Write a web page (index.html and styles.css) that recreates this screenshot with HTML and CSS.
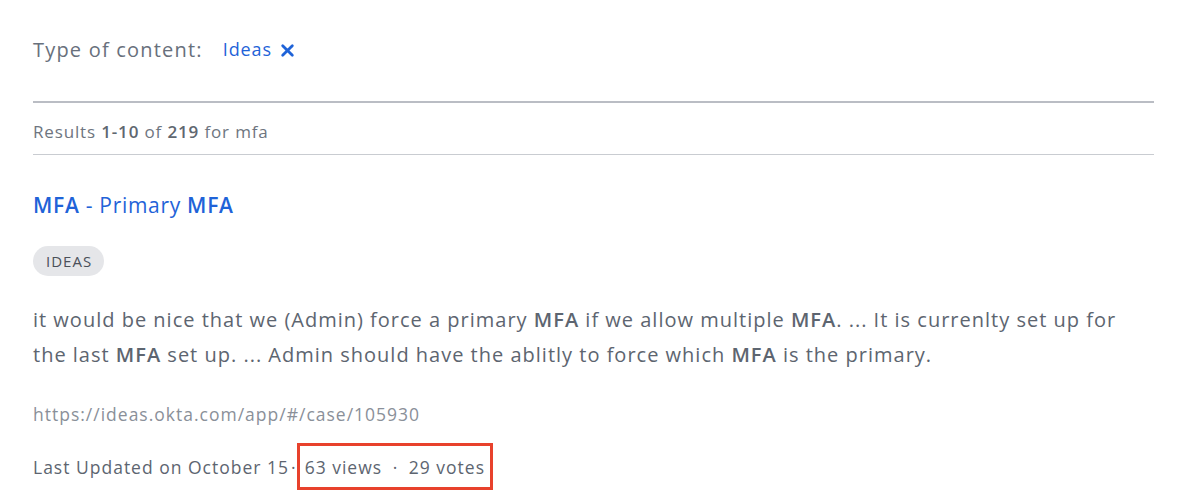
FILE: index.html
```html
<!DOCTYPE html>
<html lang="en">
<head>
<meta charset="utf-8">
<title>Search results</title>
<link rel="stylesheet" href="styles.css">
</head>
<body>
<div class="page">
  <div class="filter">
    <span class="filter-label">Type of content:</span>
    <span class="chip">Ideas
      <svg class="chip-x" viewBox="0 0 14 14" width="15" height="15" aria-hidden="true"><path d="M2.5 2.5 L11.5 11.5 M11.5 2.5 L2.5 11.5" stroke="#1f63d8" stroke-width="2.6" stroke-linecap="round" fill="none"/></svg>
    </span>
  </div>
  <div class="summary">Results <b>1-10</b> of <b>219</b> for mfa</div>
  <div class="result">
    <a class="result-title" href="#"><b>MFA</b> - Primary <b>MFA</b></a>
    <div class="badge-row"><span class="badge">IDEAS</span></div>
    <p class="snippet">it would be nice that we (Admin) force a primary <b>MFA</b> if we allow multiple <b>MFA</b>. ... It is currenlty set up for the last <b>MFA</b> set up. ... Admin should have the ablitly to force which <b>MFA</b> is the primary.</p>
    <div class="url">https://ideas.okta.com/app/#/case/105930</div>
    <div class="meta"><span>Last Updated on October 15</span><span class="dot">·</span><span class="highlight">63 views <span class="dot2">·</span> 29 votes</span></div>
  </div>
</div>
</body>
</html>
```
FILE: styles.css
```css
html, body {
  margin: 0;
  padding: 0;
  background: #ffffff;
}
body {
  font-family: "Open Sans", "Lato", sans-serif;
  color: #5f6770;
}
.page {
  width: 1121px;
  padding: 30px 0 0 33px;
}
.filter {
  display: flex;
  align-items: center;
  height: 38px;
  padding-bottom: 33px;
  border-bottom: 2px solid #babdc4;
}
.filter-label {
  font-size: 20px;
  letter-spacing: 1.2px;
  color: #68707c;
}
.chip {
  display: flex;
  align-items: center;
  margin-left: 20px;
  font-size: 18px;
  letter-spacing: 0.9px;
  color: #1f63d8;
}
.chip-x {
  margin-left: 8px;
  margin-top: 3px;
}
.summary {
  height: 52px;
  line-height: 58px;
  font-size: 17px;
  letter-spacing: 0.85px;
  color: #6e7580;
  border-bottom: 1px solid #c9ccd1;
  box-sizing: border-box;
}
.summary b {
  font-weight: 600;
  color: #5f6770;
}
.result {
  padding-top: 36px;
}
.result-title {
  display: block;
  font-size: 21px;
  letter-spacing: 0.7px;
  color: #1f63d8;
  text-decoration: none;
  line-height: 28px;
}
.result-title b {
  font-weight: 600;
}
.badge-row {
  margin-top: 27px;
}
.badge {
  display: inline-block;
  background: #e5e6e9;
  border-radius: 15px;
  font-size: 15px;
  letter-spacing: 1px;
  color: #4a5059;
  height: 30px;
  line-height: 30px;
  padding: 0 12px 0 13px;
}
.snippet {
  margin: 26px 0 0;
  font-size: 20px;
  letter-spacing: 1px;
  line-height: 35px;
  color: #5d6570;
  width: 1100px;
}
.snippet b {
  font-weight: 600;
}
.url {
  margin-top: 31px;
  font-size: 17.5px;
  letter-spacing: 1px;
  color: #8a9099;
  line-height: 22px;
}
.meta {
  margin-top: 18px;
  font-size: 17.5px;
  letter-spacing: 1px;
  color: #5d6570;
  line-height: 24px;
  display: flex;
  align-items: center;
}
.dot {
  margin-left: 2px;
}
.highlight {
  border: 3px solid #e8412c;
  padding: 9px 5px 8px 5px;
  margin-left: 0;
}
.dot2 {
  margin: 0 5px;
}
```
